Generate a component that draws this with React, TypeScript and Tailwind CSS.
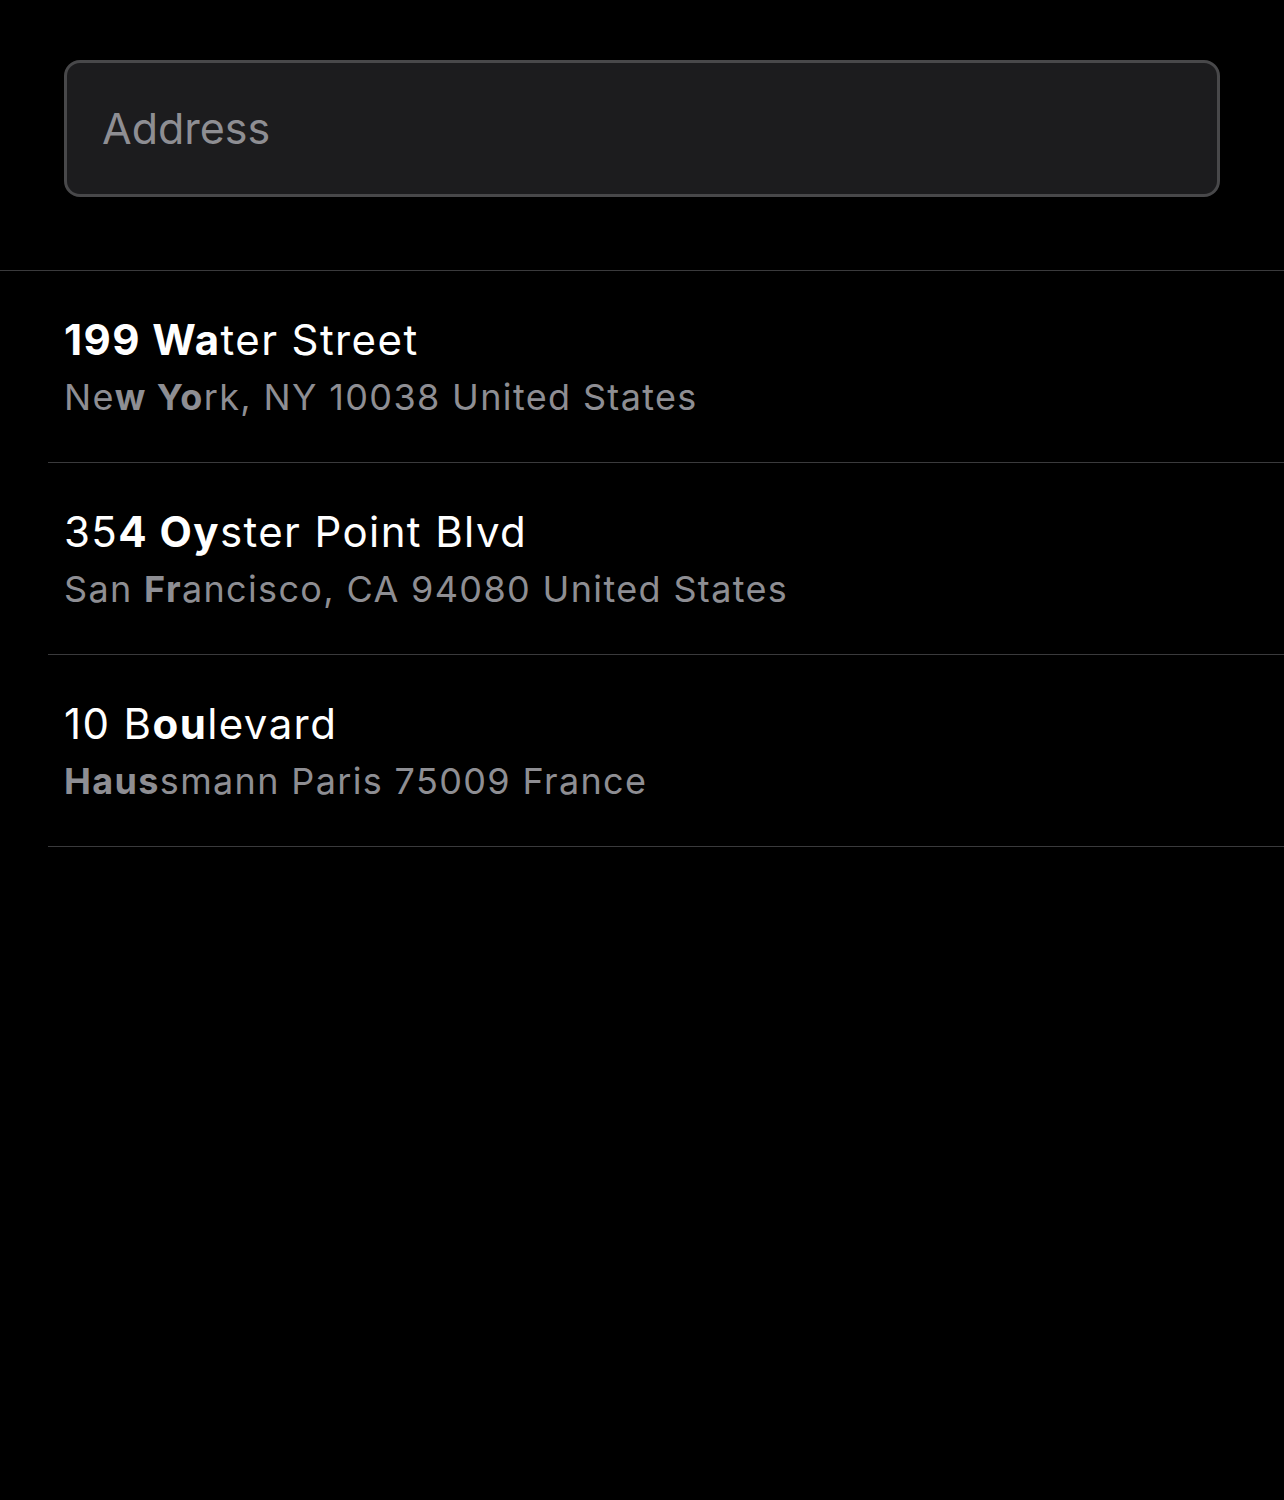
const results = [
  {
    title: [
      { t: "199 Wa", b: true },
      { t: "ter Street", b: false },
    ],
    sub: [
      { t: "Ne", b: false },
      { t: "w Yo", b: true },
      { t: "rk, NY 10038 United States", b: false },
    ],
  },
  {
    title: [
      { t: "35", b: false },
      { t: "4 Oy", b: true },
      { t: "ster Point Blvd", b: false },
    ],
    sub: [
      { t: "San ", b: false },
      { t: "Fr", b: true },
      { t: "ancisco, CA 94080 United States", b: false },
    ],
  },
  {
    title: [
      { t: "10 B", b: false },
      { t: "ou", b: true },
      { t: "levard", b: false },
    ],
    sub: [
      { t: "Haus", b: true },
      { t: "smann Paris 75009 France", b: false },
    ],
  },
];

function Parts({ parts }: { parts: { t: string; b: boolean }[] }) {
  return (
    <>
      {parts.map((p, i) => (
        <span key={i} className={p.b ? "font-bold" : "font-normal"}>
          {p.t}
        </span>
      ))}
    </>
  );
}

export default function App() {
  return (
    <div
      className="w-full min-h-[1500px] bg-black"
      style={{ fontFamily: "Inter, 'Noto Sans', sans-serif" }}
    >
      <div className="px-16 pt-[60px] pb-[73px]">
        <div className="h-[137px] rounded-[16px] border-[3px] border-[#48484a] bg-[#1c1c1e] flex items-center pl-[35px]">
          <input
            className="w-full bg-transparent outline-none text-[43px] text-white placeholder:text-[#8e8e93]"
            placeholder="Address"
          />
        </div>
      </div>
      <div className="border-t border-[#3a3a3c]">
        {results.map((r, i) => (
          <div key={i} className="ml-12 border-b border-[#3a3a3c] h-[192px] flex flex-col justify-center gap-[10px] pl-4">
            <div className="text-[42px] leading-[50px] tracking-[1.4px] text-white whitespace-nowrap">
              <Parts parts={r.title} />
            </div>
            <div className="text-[36px] leading-[44px] tracking-[1.35px] text-[#8e8e93] whitespace-nowrap">
              <Parts parts={r.sub} />
            </div>
          </div>
        ))}
      </div>
    </div>
  );
}
